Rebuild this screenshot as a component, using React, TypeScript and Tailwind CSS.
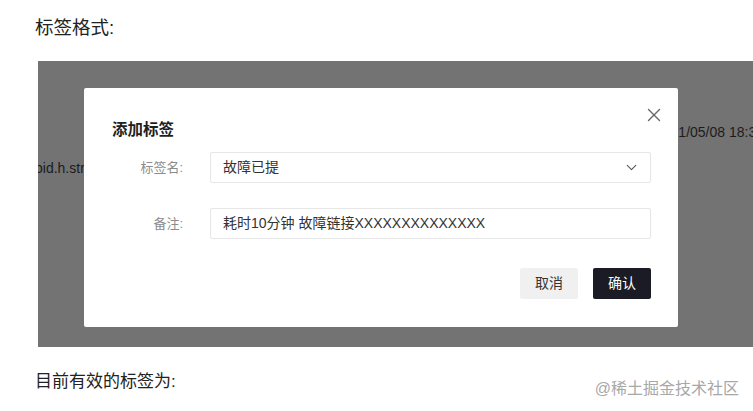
import { ChevronDown, X } from 'lucide-react'

const Field = ({ label, children }: { label: string; children: React.ReactNode }) => (
  <div className="flex items-center">
    <span className="w-[71px] text-right text-[13px] text-[#8c8c8c]">{label}</span>
    <div className="ml-[27px] w-[441px] h-[31px] border border-[#e6e6e6] rounded-[2px] flex items-center justify-between pl-[12px] pr-[10px] text-[14px] text-[#333]">
      {children}
    </div>
  </div>
)

export default function App() {
  return (
    <div className="w-[753px] h-[411px] bg-white overflow-hidden font-['Liberation_Sans','Noto_Sans_CJK_SC',sans-serif] text-[#222]">
      {/* Heading */}
      <h2 className="pl-[35px] pt-[17px] text-[18.5px] leading-[22px]">标签格式:</h2>

      {/* Screenshot with dimmed backdrop */}
      <div className="relative mt-[22px] ml-[38px] h-[286px] bg-[#737373] overflow-hidden pt-[27px] pl-[46px]">
        <span className="absolute left-[-3px] top-[97px] text-[14px] leading-[20px] text-[#1c1c1c] whitespace-nowrap">oid.h.str</span>
        <span className="absolute left-[617px] top-[61px] text-[14px] leading-[20px] text-[#1c1c1c] whitespace-nowrap">2021/05/08 18:30</span>

        {/* Modal */}
        <div className="relative z-10 w-[594px] h-[239px] bg-white rounded-[2px] pt-[32px] pl-[28px] pr-[27px]">
          <button className="absolute left-[559px] top-[16px] text-[#666]">
            <X size={22} strokeWidth={1.5} />
          </button>
          <h3 className="text-[15.5px] leading-[20px] font-semibold text-[#1f1f1f]">添加标签</h3>

          <div className="mt-[12px] flex flex-col gap-[25px]">
            <Field label="标签名:">
              <span>故障已提</span>
              <ChevronDown size={17} strokeWidth={1.5} className="text-[#555]" />
            </Field>
            <Field label="备注:">
              <span>耗时10分钟 故障链接XXXXXXXXXXXXXX</span>
            </Field>
          </div>

          <div className="mt-[29px] flex justify-end gap-[15px]">
            <button className="w-[58px] h-[31px] rounded-[2px] bg-[#f0f0f0] text-[14px] text-[#333]">取消</button>
            <button className="w-[58px] h-[31px] rounded-[2px] bg-[#1b1b26] text-[14px] text-white">确认</button>
          </div>
        </div>
      </div>

      {/* Footer */}
      <div className="flex justify-between pl-[35px] pr-[14px] mt-[23px]">
        <p className="text-[17px] leading-[24px]">目前有效的标签为:</p>
        <span className="mt-[8px] text-[16px] leading-[22px] text-[#a8a8a8]">@稀土掘金技术社区</span>
      </div>
    </div>
  )
}
